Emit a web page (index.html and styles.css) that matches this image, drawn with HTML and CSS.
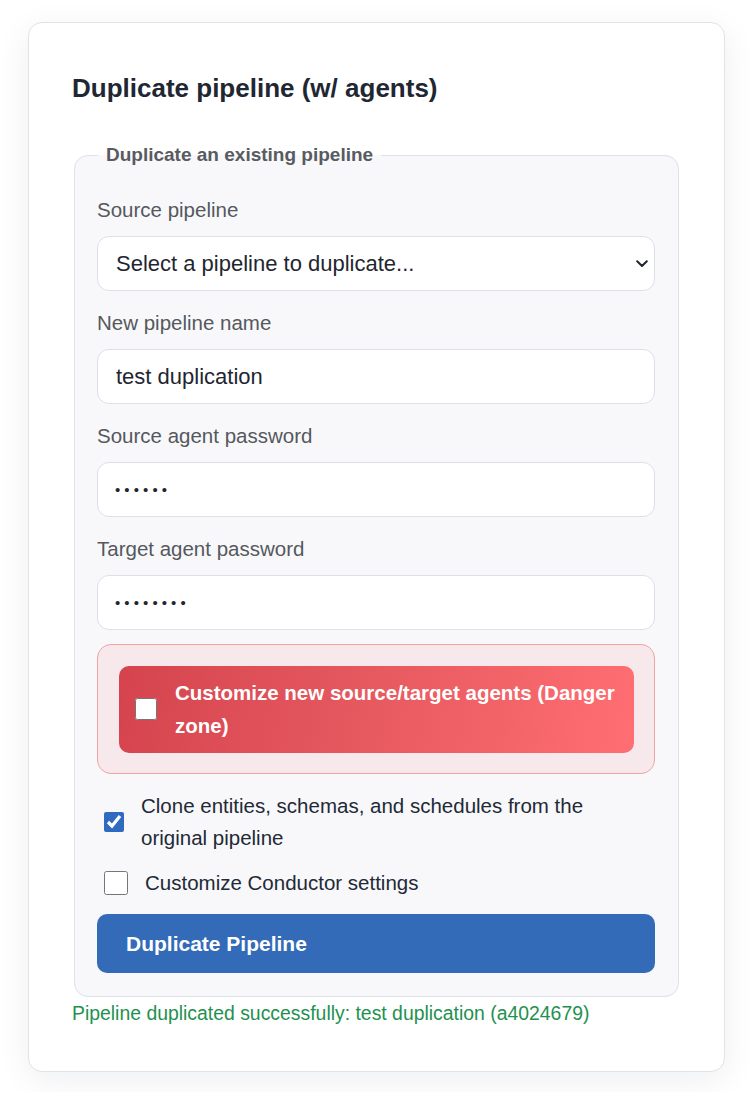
FILE: index.html
```html
<!DOCTYPE html>
<html lang="en">
<head>
<meta charset="utf-8">
<title>Duplicate pipeline</title>
<link rel="stylesheet" href="styles.css">
</head>
<body>
<div class="page">
  <section class="card">
    <h2 class="title">Duplicate pipeline (w/ agents)</h2>
    <fieldset class="group">
      <legend class="legend">Duplicate an existing pipeline</legend>

      <div class="field">
        <label class="label" for="src">Source pipeline</label>
        <div class="select-wrap">
          <select id="src" class="input select">
            <option>Select a pipeline to duplicate...</option>
          </select>
          <svg class="chevron" width="12" height="8" viewBox="0 0 12 8" aria-hidden="true"><polyline points="1.2,1.2 6,6 10.8,1.2" fill="none" stroke="#1f2630" stroke-width="2" stroke-linecap="round" stroke-linejoin="round"/></svg>
        </div>
      </div>

      <div class="field">
        <label class="label" for="name">New pipeline name</label>
        <input id="name" class="input" type="text" value="test duplication">
      </div>

      <div class="field">
        <label class="label" for="spw">Source agent password</label>
        <input id="spw" class="input pw" type="password" value="abcdef">
      </div>

      <div class="field field-last">
        <label class="label" for="tpw">Target agent password</label>
        <input id="tpw" class="input pw" type="password" value="abcdefgh">
      </div>

      <div class="danger">
        <label class="danger-inner">
          <input type="checkbox" class="box box-danger">
          <span>Customize new source/target agents (Danger zone)</span>
        </label>
      </div>

      <label class="check-row row-clone">
        <input type="checkbox" class="box box-clone" checked>
        <span class="clone-text">Clone entities, schemas, and schedules from the original pipeline</span>
      </label>

      <label class="check-row row-conductor">
        <input type="checkbox" class="box box-conductor">
        <span>Customize Conductor settings</span>
      </label>

      <button class="btn" type="button">Duplicate Pipeline</button>
    </fieldset>
    <p class="success">Pipeline duplicated successfully: test duplication (a4024679)</p>
  </section>
</div>
</body>
</html>
```

FILE: styles.css
```css
html, body {
  margin: 0;
  padding: 0;
  background: #ffffff;
}

body {
  font-family: "Liberation Sans", Arial, Helvetica, sans-serif;
  color: #1f2733;
}

.page {
  padding: 22px 29px 20px 28px;
}

.card {
  background: #ffffff;
  border: 1px solid #dfe3ea;
  border-radius: 14px;
  box-shadow: 0 8px 34px rgba(20, 30, 60, 0.07);
  padding: 50px 43px 46px 43px;
}

.title {
  margin: 0 0 40px 0;
  font-size: 26px;
  line-height: 30px;
  font-weight: 700;
  color: #1f2733;
}

.group {
  margin: 0 2px;
  border: 1px solid #dde1eb;
  border-radius: 14px;
  background: #f8f8fb;
  padding: 31px 23px 23px 22px;
  min-width: 0;
}

.legend {
  padding: 0 8px;
  margin-left: 1px;
  font-size: 19px;
  line-height: 24px;
  font-weight: 700;
  color: #585b60;
}

.field {
  margin-bottom: 20px;
}

.field-last {
  margin-bottom: 14px;
}

.label {
  display: block;
  font-size: 20.5px;
  line-height: 24px;
  color: #55585d;
  margin-bottom: 14px;
}

.input {
  display: block;
  width: 100%;
  height: 55px;
  box-sizing: border-box;
  border: 1px solid #dbe0e9;
  border-radius: 12px;
  background: #ffffff;
  padding: 0 18px;
  font-family: "Liberation Sans", Arial, Helvetica, sans-serif;
  font-size: 22px;
  color: #1f2630;
  outline: none;
}

.select-wrap {
  position: relative;
}

.select {
  appearance: none;
  -webkit-appearance: none;
  height: 55px;
}

.chevron {
  position: absolute;
  right: 7px;
  top: 24px;
}

.pw {
  font-size: 15px;
  letter-spacing: 4.1px;
  padding-left: 17px;
}

.danger {
  border: 1px solid #efa3a5;
  background: #f7e9eb;
  border-radius: 14px;
  padding: 21px 20px 20px 21px;
}

.danger-inner {
  display: flex;
  align-items: center;
  gap: 18px;
  padding: 10px 16px 11px 16px;
  border-radius: 10px;
  background: linear-gradient(100deg, #d5444e 0%, #e75a60 50%, #ff6e72 100%);
  color: #ffffff;
  font-size: 20.5px;
  line-height: 33px;
  font-weight: 700;
}

.box {
  flex: none;
  margin: 0;
}

.box-danger {
  width: 22px;
  height: 22px;
}

.check-row {
  display: flex;
  align-items: center;
  gap: 17px;
  font-size: 20.5px;
  line-height: 32px;
  color: #222a35;
}

.clone-text {
  max-width: 470px;
}

.row-clone {
  margin-top: 16px;
}

.box-clone {
  width: 20px;
  height: 20px;
  margin-left: 7px;
  accent-color: #3069c0;
}

.row-conductor {
  margin-top: 13px;
}

.box-conductor {
  width: 24px;
  height: 24px;
  margin-left: 7px;
}

.btn {
  display: block;
  width: 100%;
  height: 59px;
  margin-top: 15px;
  border: none;
  border-radius: 10px;
  background: #336bb8;
  color: #ffffff;
  font-family: "Liberation Sans", Arial, Helvetica, sans-serif;
  font-size: 21px;
  font-weight: 700;
  text-align: left;
  padding: 0 0 0 29px;
}

.success {
  margin: 4px 0 0 0;
  font-size: 19.4px;
  line-height: 24px;
  color: #1e9150;
}
```
